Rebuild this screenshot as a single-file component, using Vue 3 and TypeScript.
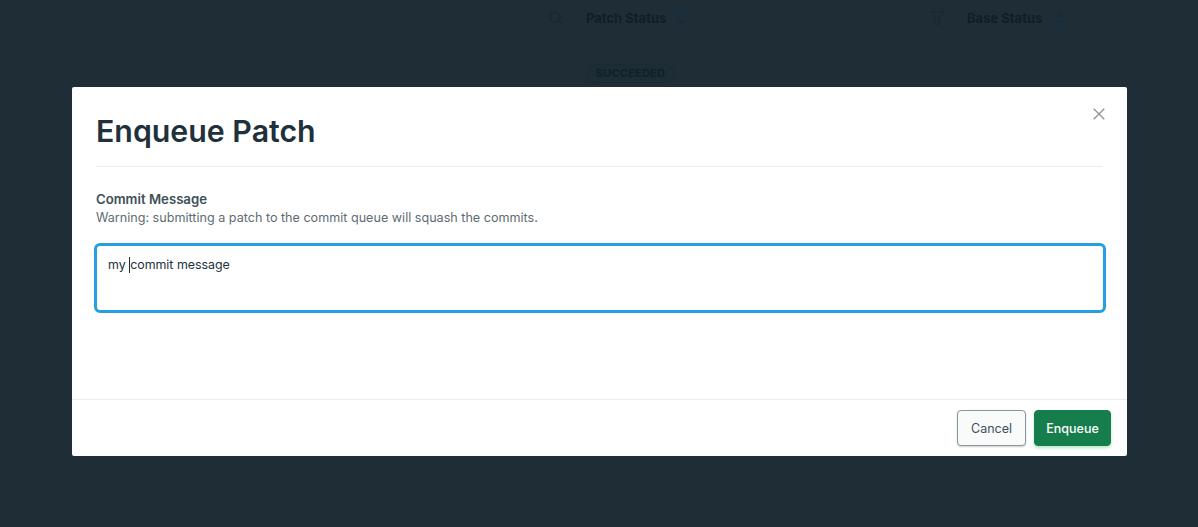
<script setup lang="ts">
const placeholder: string = ''
</script>

<template>
  <div class="page">
    <div class="bg">
      <div class="head">
        <svg class="search" width="15" height="15" viewBox="0 0 15 15" fill="none" stroke="#1a262f" stroke-width="1.2"><circle cx="6" cy="6" r="5" /><path d="M9.7 9.7 14 14" /></svg>
        <span class="col patch">Patch Status</span>
        <svg class="sort" width="8" height="13" viewBox="0 0 8 13"><path d="M4 0 8 5H0Z" fill="#0f3048" /><path d="M4 13 0 8H8Z" fill="#1c2a33" /></svg>
        <svg class="funnel" width="14" height="14" viewBox="0 0 14 14" fill="none" stroke="#1a262f" stroke-width="1"><path d="M.7.7H13.3L9 7V13.3H5V7Z" /></svg>
        <span class="col base">Base Status</span>
        <svg class="sort" width="8" height="13" viewBox="0 0 8 13"><path d="M4 0 8 5H0Z" fill="#1c2a33" /><path d="M4 13 0 8H8Z" fill="#0f3048" /></svg>
      </div>
      <div class="badge">SUCCEEDED</div>
    </div>
    <div class="modal">
      <button class="close" aria-label="Close">
        <svg width="12" height="12" viewBox="0 0 12 12" fill="none" stroke="#8a9398" stroke-width="1.3"><path d="M.7.7 11.3 11.3M11.3.7.7 11.3" /></svg>
      </button>
      <h1 class="title">Enqueue Patch</h1>
      <div class="body">
        <div class="label">Commit Message</div>
        <div class="warn">Warning: submitting a patch to the commit queue will squash the commits.</div>
        <div class="area"><span>my </span><span class="caret"></span><span>commit message</span></div>
      </div>
      <div class="footer">
        <button class="btn cancel">Cancel</button>
        <button class="btn ok">Enqueue</button>
      </div>
    </div>
  </div>
</template>

<style>
html, body { margin: 0; background: #1f2d37; }
</style>

<style scoped>
.page {
  position: relative;
  width: 1198px;
  height: 527px;
  overflow: hidden;
  background: #1f2d37;
  font-family: Inter, "Liberation Sans", sans-serif;
}
.bg {
  position: absolute;
  left: 549px;
  top: 0;
  width: 560px;
}
.head {
  display: flex;
  align-items: center;
  height: 36px;
  color: #121d25;
}
.search { margin-right: 22px; }
.col { font-size: 13px; font-weight: 700; white-space: nowrap; }
.patch { width: 82px; }
.sort { margin-left: 9px; }
.funnel { margin-left: 245px; margin-right: 23px; }
.base { width: 79px; }
.badge {
  margin: 28px 0 0 37px;
  width: 89px;
  height: 19px;
  box-sizing: border-box;
  border: 1px solid #1c2b33;
  border-radius: 10px;
  background: #1c2d35;
  color: #11202a;
  font-size: 11px;
  font-weight: 700;
  letter-spacing: 0.2px;
  line-height: 17px;
  text-align: center;
}
.modal {
  position: absolute;
  left: 72px;
  top: 87px;
  width: 1055px;
  height: 369px;
  display: flex;
  flex-direction: column;
  background: #fff;
  border-radius: 2px;
}
.close {
  position: absolute;
  top: 21px;
  right: 22px;
  padding: 0;
  border: 0;
  background: none;
  display: flex;
}
.title {
  margin: 0 24px;
  height: 80px;
  box-sizing: border-box;
  padding-top: 24px;
  border-bottom: 1px solid #e7eeec;
  font-size: 30.3px;
  font-weight: 600;
  line-height: 40px;
  color: #21313c;
}
.body {
  flex: 1;
  padding: 24px 21px 0 24px;
}
.label {
  font-size: 13.2px;
  font-weight: 600;
  line-height: 16px;
  color: #3d4f58;
}
.warn {
  margin-top: 3px;
  font-size: 12.6px;
  line-height: 16px;
  color: #5d6c74;
}
.area {
  margin: 17px 0 0 -2px;
  height: 70px;
  box-sizing: border-box;
  padding: 11px 11px;
  border: 3px solid #24a0e0;
  border-radius: 6px;
  font-size: 12.4px;
  line-height: 16px;
  color: #21313c;
  display: flex;
  white-space: pre;
}
.caret {
  width: 1px;
  height: 16px;
  background: #21313c;
}
.footer {
  height: 57px;
  box-sizing: border-box;
  border-top: 1px solid #e7eeec;
  display: flex;
  justify-content: flex-end;
  align-items: flex-start;
  gap: 8px;
  padding: 10px 16px 0 0;
}
.btn {
  height: 36px;
  box-sizing: border-box;
  border-radius: 4px;
  font-family: inherit;
  font-size: 12.5px;
  font-weight: 400;
}
.cancel {
  width: 69px;
  background: #f9fbfa;
  border: 1px solid #89979b;
  color: #3d4f58;
  box-shadow: 0 1px 2px rgba(0, 0, 0, 0.2);
}
.ok {
  width: 77px;
  background: #167d4c;
  border: 1px solid #167d4c;
  color: #fff;
  font-weight: 500;
  box-shadow: 0 2px 3px rgba(19, 170, 82, 0.3);
}
</style>
